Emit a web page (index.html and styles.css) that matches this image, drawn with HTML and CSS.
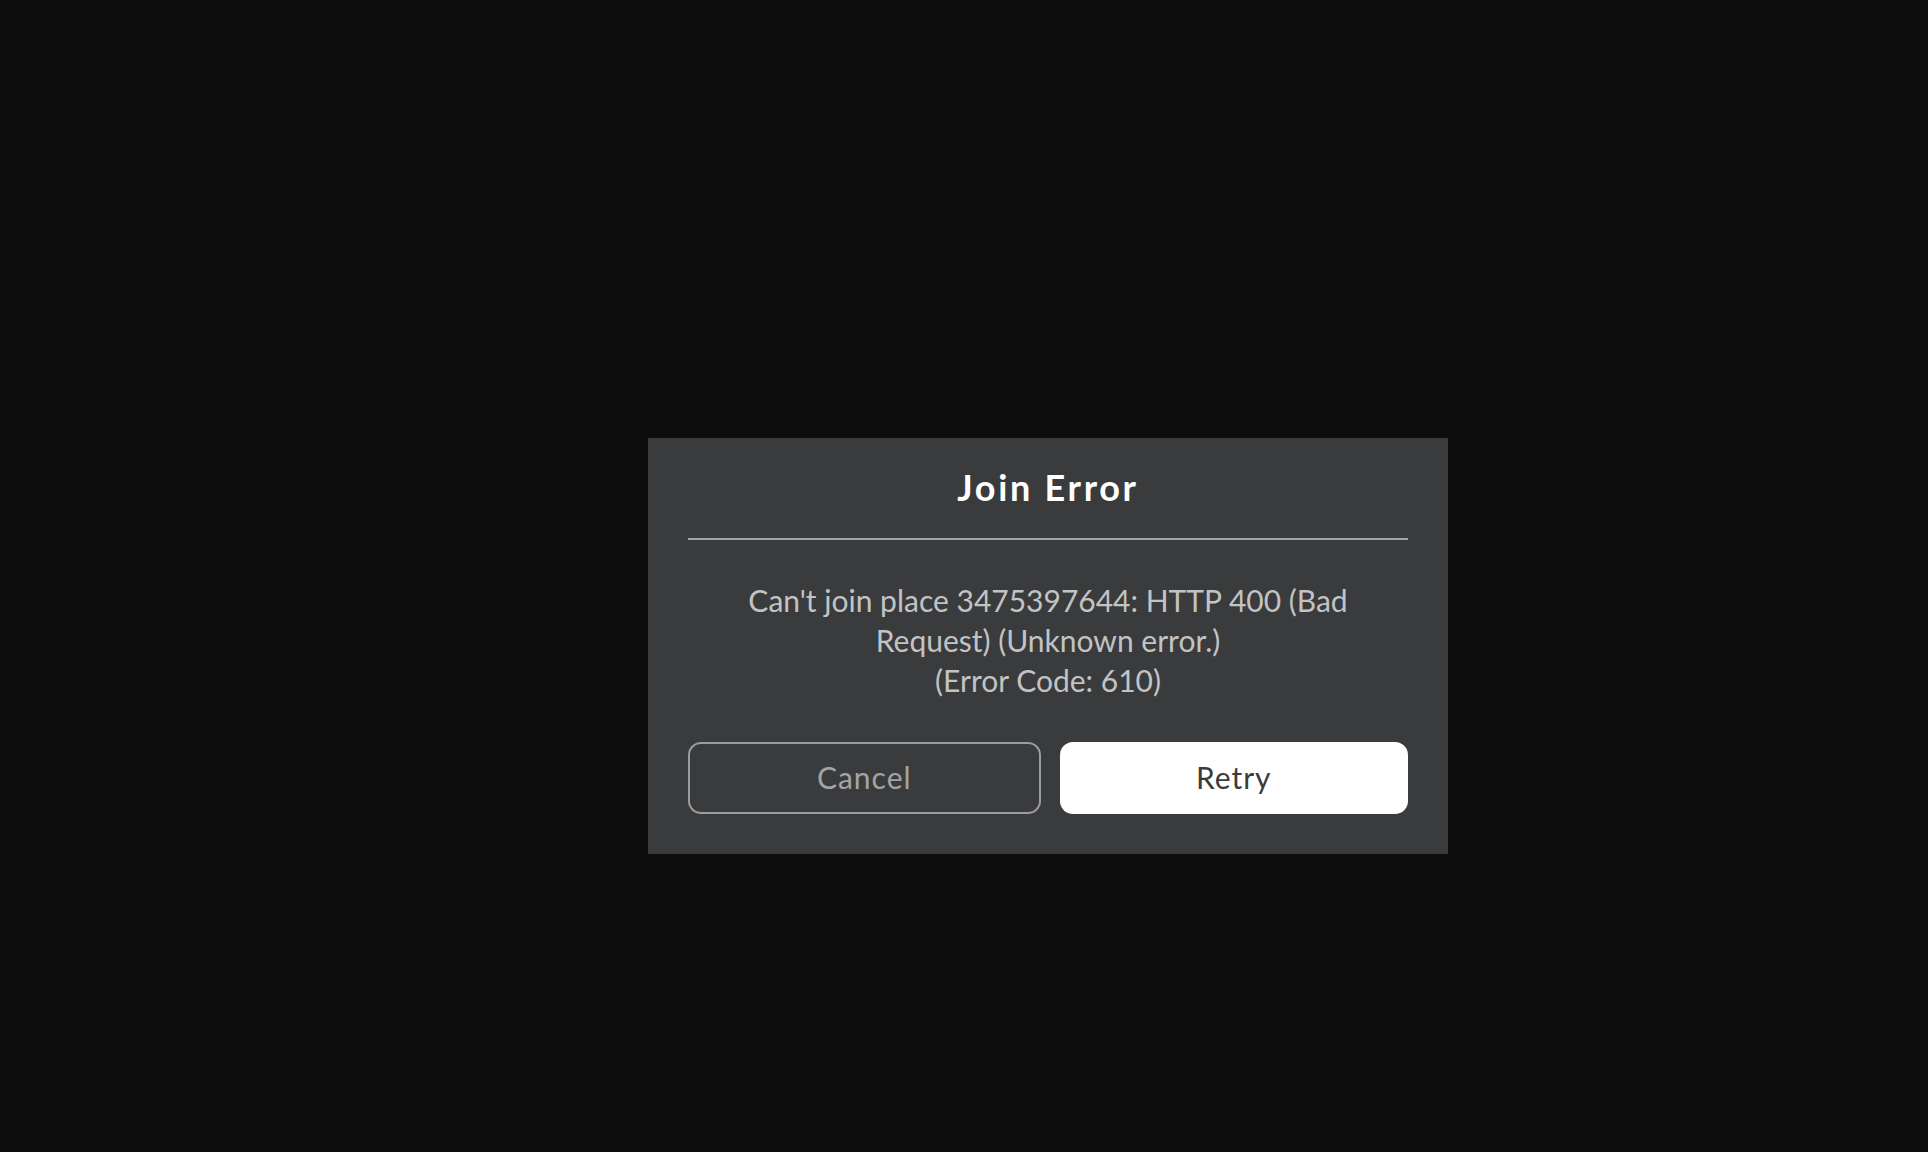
FILE: index.html
```html
<!DOCTYPE html>
<html>
<head>
<meta charset="utf-8">
<link rel="stylesheet" href="styles.css">
</head>
<body>
<div class="screen">
  <div class="dialog">
    <div class="title">Join Error</div>
    <div class="divider"></div>
    <div class="message">Can't join place 3475397644: HTTP 400 (Bad<br>Request) (Unknown error.)<br>(Error Code: 610)</div>
    <div class="buttons">
      <div class="btn btn-cancel">Cancel</div>
      <div class="btn btn-retry">Retry</div>
    </div>
  </div>
</div>
</body>
</html>
```
FILE: styles.css
```css
html, body {
  margin: 0;
  padding: 0;
  background: #0d0d0d;
  width: 1928px;
  height: 1152px;
  overflow: hidden;
  font-family: "Lato", "Open Sans", sans-serif;
}
.screen {
  padding-top: 438px;
  padding-left: 648px;
}
.dialog {
  width: 800px;
  box-sizing: border-box;
  background: #393b3d;
  padding: 0 40px 40px;
  display: flex;
  flex-direction: column;
}
.title {
  height: 100px;
  line-height: 98px;
  text-align: center;
  color: #ffffff;
  font-size: 36px;
  font-weight: 700;
  letter-spacing: 2.7px;
}
.divider {
  height: 2px;
  background: #a3a3a4;
}
.message {
  margin-top: 40px;
  text-align: center;
  color: #c3c3c3;
  font-size: 30px;
  line-height: 40px;
}
.buttons {
  margin-top: 42px;
  display: flex;
  gap: 19px;
}
.btn {
  flex: 1;
  height: 72px;
  box-sizing: border-box;
  border-radius: 13px;
  display: flex;
  align-items: center;
  justify-content: center;
  font-size: 30px;
  letter-spacing: 1px;
  padding-bottom: 2px;
}
.btn-cancel {
  border: 2px solid #9c9c9d;
  color: #a4a4a5;
}
.btn-retry {
  background: #ffffff;
  color: #393b3d;
}
```
